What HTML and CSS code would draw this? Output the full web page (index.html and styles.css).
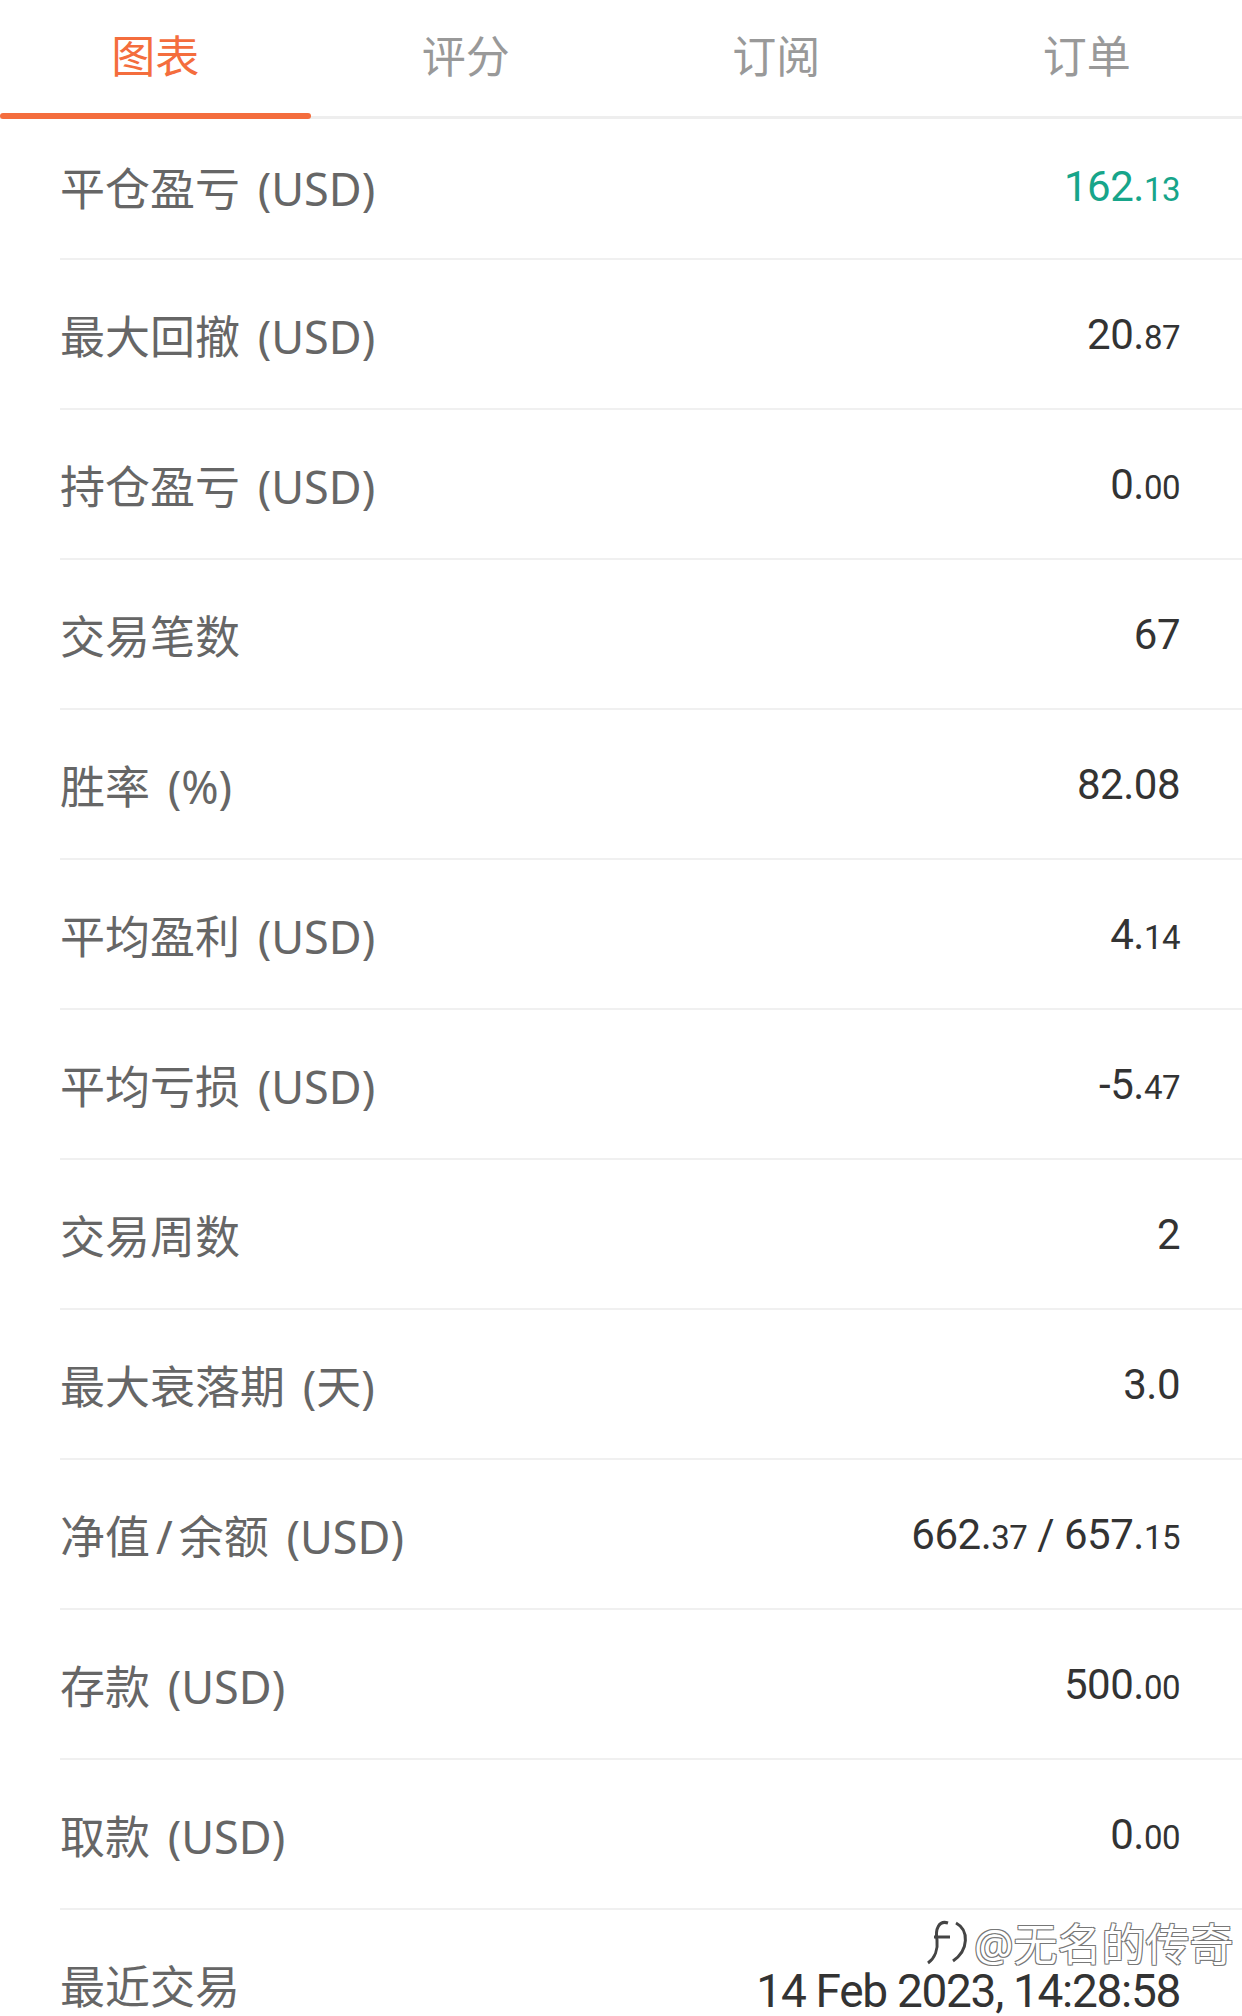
FILE: index.html
```html
<!DOCTYPE html>
<html lang="zh">
<head>
  <meta charset="UTF-8">
  <title>图表</title>
  <link rel="stylesheet" href="styles.css">
</head>
<body>

  <div class="tabs">
    <div class="tab active">图表</div>
    <div class="tab">评分</div>
    <div class="tab">订阅</div>
    <div class="tab">订单</div>
  </div>

  <div class="stats">
    <div class="row">
      <span class="label">平仓盈亏 (USD)</span>
      <span class="value up">162.<small>13</small></span>
    </div>
    <div class="row">
      <span class="label">最大回撤 (USD)</span>
      <span class="value">20.<small>87</small></span>
    </div>
    <div class="row">
      <span class="label">持仓盈亏 (USD)</span>
      <span class="value">0.<small>00</small></span>
    </div>
    <div class="row">
      <span class="label">交易笔数</span>
      <span class="value">67</span>
    </div>
    <div class="row">
      <span class="label">胜率 (%)</span>
      <span class="value">82.08</span>
    </div>
    <div class="row">
      <span class="label">平均盈利 (USD)</span>
      <span class="value">4.<small>14</small></span>
    </div>
    <div class="row">
      <span class="label">平均亏损 (USD)</span>
      <span class="value">-5.<small>47</small></span>
    </div>
    <div class="row">
      <span class="label">交易周数</span>
      <span class="value">2</span>
    </div>
    <div class="row">
      <span class="label">最大衰落期 (天)</span>
      <span class="value">3.0</span>
    </div>
    <div class="row">
      <span class="label">净值<span class="slash">/</span>余额 (USD)</span>
      <span class="value">662.<small>37</small> / 657.<small>15</small></span>
    </div>
    <div class="row">
      <span class="label">存款 (USD)</span>
      <span class="value">500.<small>00</small></span>
    </div>
    <div class="row">
      <span class="label">取款 (USD)</span>
      <span class="value">0.<small>00</small></span>
    </div>
    <div class="row">
      <span class="label">最近交易</span>
      <span class="value date">14 Feb 2023, 14:28:58</span>
    </div>
  </div>

  <!-- watermark from the original screenshot -->
  <div class="watermark">
    <svg width="46" height="50" viewBox="0 0 46 50">
      <path d="M22 6 C13 3 9 12 11 23 C12 32 9 41 2 46" fill="none" stroke="#444" stroke-width="3"/>
      <path d="M8 20 L24 20" fill="none" stroke="#444" stroke-width="3"/>
      <path d="M30 6 C43 13 43 33 27 44" fill="none" stroke="#444" stroke-width="3"/>
    </svg>
    <span>@无名的传奇</span>
  </div>

</body>
</html>
```

FILE: styles.css
```css
body {
  margin: 0;
  background-color: white;
  font-family: "Noto Sans", "Noto Sans CJK SC", sans-serif;
  overflow: hidden;
}
.tabs {
  display: flex;
  height: 116px;
  border-bottom: 3px solid #eeeeee;
}
.tab {
  position: relative;
  flex: 1;
  display: flex;
  align-items: center;
  justify-content: center;
  padding-bottom: 8px;
  font-size: 44px;
  color: #999999;
}
.tab.active {
  color: #f46d3d;
}
.tab.active::after {
  content: "";
  position: absolute;
  left: 0;
  right: 0;
  bottom: -3px;
  height: 6px;
  border-radius: 3px;
  background-color: #f46d3d;
}
.stats {
  padding-left: 60px;
}
.row {
  display: flex;
  align-items: center;
  justify-content: space-between;
  height: 148px;
  padding-right: 62px;
  border-bottom: 2px solid #f0f0f0;
}
.row:first-child {
  height: 135px;
  padding-bottom: 4px;
}
.label {
  font-size: 45px;
  color: #666666;
  word-spacing: 6px;
}
.slash {
  margin: 0 6px;
}
.value {
  font-family: Roboto, "Noto Sans", sans-serif;
  font-size: 42px;
  color: #333333;
  letter-spacing: -0.5px;
}
.value small {
  font-size: 33px;
}
.value.up {
  color: #17a58a;
}
.value.date {
  font-size: 46px;
  letter-spacing: -1.3px;
  padding-top: 14px;
}
.watermark {
  position: absolute;
  left: 926px;
  top: 1910px;
  display: flex;
  align-items: center;
  gap: 2px;
  font-size: 44px;
  color: white;
  text-shadow: -1px -1px 0 #777, 1px -1px 0 #777, -1px 1px 0 #777, 1px 1px 0 #777;
}
```
